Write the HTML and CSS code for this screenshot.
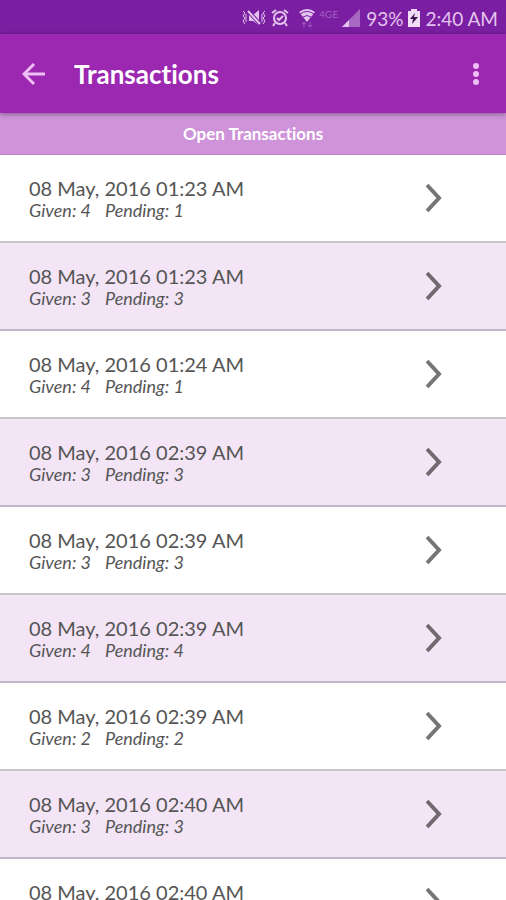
FILE: index.html
```html
<!DOCTYPE html>
<html lang="en">
<head>
    <meta charset="UTF-8">
    <meta name="viewport" content="width=device-width, initial-scale=1.0">
    <title>Transactions</title>
    <link rel="stylesheet" href="styles.css">
</head>
<body>

    <div class="status-bar">
        <svg class="icon-mute" width="26" height="20" viewBox="0 0 26 20">
            <path d="M8 7h4l6-5v15l-6-4H8z" fill="#e3c4ee"/>
            <path d="M6 2l14 15" stroke="#7b1fa2" stroke-width="4"/>
            <path d="M7 3l12 13" stroke="#e3c4ee" stroke-width="2"/>
            <path d="M2 3l2 2-2 3 2 2-2 3 2 3M5 6v8M24 3l-2 2 2 3-2 2 2 3-2 3M21 6v8" fill="none" stroke="#e3c4ee" stroke-width="1"/>
        </svg>
        <svg class="icon-alarm" width="18" height="20" viewBox="0 0 18 20">
            <circle cx="9" cy="10" r="6" fill="none" stroke="#e3c4ee" stroke-width="2"/>
            <path d="M1 5l4-3M17 5l-4-3M4 15l-2 3M14 15l2 3M6 10l2 2 4-4" fill="none" stroke="#e3c4ee" stroke-width="2"/>
        </svg>
        <svg class="icon-wifi" width="16" height="20" viewBox="0 0 16 20">
            <path d="M0 4q8-6 16 0l-8 10z" fill="#e3c4ee"/>
            <path d="M1 6q7-5 14 0M4 9q4-3 8 0" fill="none" stroke="#7b1fa2" stroke-width="1"/>
            <path d="M5 19v-5M3 16l2-2 2 2M11 14v5M9 17l2 2 2-2" fill="none" stroke="#a45fc0" stroke-width="1"/>
        </svg>
        <span class="network">4GE</span>
        <svg class="icon-signal" width="18" height="18" viewBox="0 0 18 18">
            <path d="M0 18L18 0v18z" fill="#a668c0"/>
            <path d="M0 18l7-7v7z" fill="#e3c4ee"/>
        </svg>
        <span>93%</span>
        <svg class="icon-battery" width="12" height="18" viewBox="0 0 12 18">
            <path d="M0 2h3V0h6v2h3v16H0z" fill="#f0dcf6"/>
            <path d="M7 4l-5 6h3l-1 5 6-7H6z" fill="#3c1450"/>
        </svg>
        <span>2:40 AM</span>
    </div>

    <header class="app-bar">
        <button class="icon-btn" aria-label="Back">
            <svg width="24" height="24" viewBox="0 0 24 24">
                <path d="M23 12H2M12 2L2 12l10 10" fill="none" stroke="#edbff5" stroke-width="3"/>
            </svg>
        </button>
        <h1>Transactions</h1>
        <button class="icon-btn" aria-label="More options">
            <svg width="8" height="24" viewBox="0 0 8 24">
                <g fill="#edbff5">
                    <circle cx="4" cy="4" r="3"/>
                    <circle cx="4" cy="12" r="3"/>
                    <circle cx="4" cy="20" r="3"/>
                </g>
            </svg>
        </button>
    </header>

    <h2 class="list-title">Open Transactions</h2>

    <ul class="transaction-list" id="transaction-list"></ul>

    <script>
        const transactions = [
            { date: '08 May, 2016 01:23 AM', given: 4, pending: 1 },
            { date: '08 May, 2016 01:23 AM', given: 3, pending: 3 },
            { date: '08 May, 2016 01:24 AM', given: 4, pending: 1 },
            { date: '08 May, 2016 02:39 AM', given: 3, pending: 3 },
            { date: '08 May, 2016 02:39 AM', given: 3, pending: 3 },
            { date: '08 May, 2016 02:39 AM', given: 4, pending: 4 },
            { date: '08 May, 2016 02:39 AM', given: 2, pending: 2 },
            { date: '08 May, 2016 02:40 AM', given: 3, pending: 3 },
            { date: '08 May, 2016 02:40 AM', given: 3, pending: 3 }
        ];

        const list = document.getElementById('transaction-list');

        transactions.forEach(transaction => {
            const listItem = document.createElement('li');
            listItem.innerHTML = `
                <a class="transaction" href="#">
                    <div>
                        <div class="date">${transaction.date}</div>
                        <div class="counts">
                            <span>Given: ${transaction.given}</span>
                            <span>Pending: ${transaction.pending}</span>
                        </div>
                    </div>
                    <svg width="16" height="30" viewBox="0 0 16 30">
                        <path d="M1 2l12 13L1 28" fill="none" stroke="#000" stroke-opacity="0.54" stroke-width="4"/>
                    </svg>
                </a>
            `;
            list.appendChild(listItem);
        });
    </script>

</body>
</html>
```
FILE: styles.css
```css
* {
    box-sizing: border-box;
}

body {
    display: flex;
    flex-direction: column;
    height: 100vh;
    margin: 0;
    overflow: hidden;
    font-family: Lato, "Open Sans", sans-serif;
    font-variant-ligatures: none;
    background-color: #fff;
}

.status-bar {
    display: flex;
    flex: none;
    align-items: center;
    justify-content: flex-end;
    height: 34px;
    padding: 2px 8px 0 0;
    background-color: #7b1fa2;
    color: #e3c4ee;
    font-size: 19px;
}

.icon-alarm {
    margin: 0 10px 0 4px;
}

.network {
    margin: 0 4px;
    align-self: flex-start;
    line-height: 24px;
    font-size: 10px;
    color: #a45fc0;
}

.icon-signal {
    margin-right: 6px;
}

.icon-battery {
    margin: 0 5px;
}

.app-bar {
    position: relative;
    display: flex;
    flex: none;
    align-items: center;
    height: 79px;
    padding: 0 18px;
    background-color: #9c27b0;
    box-shadow: 0 1px 5px rgba(0, 0, 0, 0.4);
}

.app-bar h1 {
    flex: 1;
    margin: 0 0 0 20px;
    color: #fff;
    font-size: 26px;
    font-weight: 700;
}

.icon-btn {
    display: flex;
    padding: 4px;
    background: none;
    border: none;
    cursor: pointer;
}

.icon-btn:first-child {
    padding-right: 8px;
}

.icon-btn:last-child {
    padding: 8px;
}

.list-title {
    flex: none;
    margin: 0;
    border-bottom: 1px solid #bb86c8;
    background-color: #ce93d8;
    color: #fff;
    font-size: 17px;
    line-height: 41px;
    text-align: center;
}

.transaction-list {
    flex: 1;
    min-height: 0;
    margin: 0;
    padding: 0;
    overflow-y: auto;
    list-style: none;
    scrollbar-width: none;
}

.transaction {
    display: flex;
    align-items: center;
    justify-content: space-between;
    height: 88px;
    padding: 0 64px 0 29px;
    border-bottom: 2px solid #c8c6ca;
    color: #555;
    text-decoration: none;
}

li:nth-child(even) .transaction {
    background-color: #f3e5f5;
    border-bottom-color: #c5b6ca;
}

.date {
    font-size: 20px;
    line-height: 24px;
}

.counts {
    display: flex;
    gap: 14px;
    font-size: 18px;
    font-style: italic;
    line-height: 20px;
}
```
